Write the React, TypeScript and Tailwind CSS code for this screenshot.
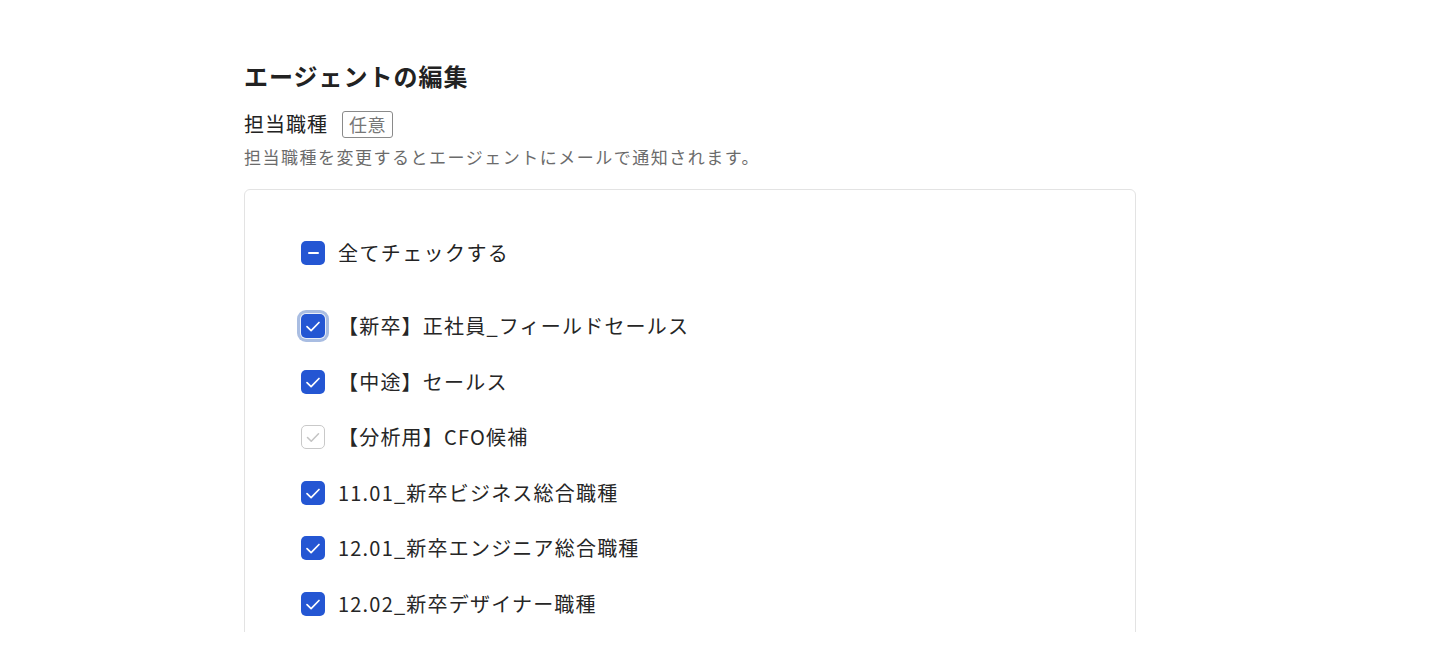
import React from 'react';

type Item = { label: string; state: 'checked' | 'disabled'; focused?: boolean };

const items: Item[] = [
  { label: '【新卒】正社員_フィールドセールス', state: 'checked', focused: true },
  { label: '【中途】セールス', state: 'checked' },
  { label: '【分析用】CFO候補', state: 'disabled' },
  { label: '11.01_新卒ビジネス総合職種', state: 'checked' },
  { label: '12.01_新卒エンジニア総合職種', state: 'checked' },
  { label: '12.02_新卒デザイナー職種', state: 'checked' },
];

const CheckMark = ({ color }: { color: string }) => (
  <svg width="24" height="24" viewBox="0 0 24 24" fill="none">
    <path d="M6 12.6l4.1 4 7.9-8.1" stroke={color} strokeWidth="1.7" strokeLinecap="round" strokeLinejoin="round" />
  </svg>
);

const Box = ({ state, focused }: { state: Item['state'] | 'mixed'; focused?: boolean }) => {
  if (state === 'disabled') {
    return (
      <span className="flex h-6 w-6 shrink-0 items-center justify-center rounded-[5px] border border-[#c9c9c9] bg-white">
        <CheckMark color="#c4c4c4" />
      </span>
    );
  }
  return (
    <span
      className={
        focused
          ? 'flex h-6 w-6 shrink-0 items-center justify-center rounded-[5px] bg-[#2456d3] shadow-[0_0_0_1px_#e9eef8,0_0_0_4px_#a9bde2]'
          : 'flex h-6 w-6 shrink-0 items-center justify-center rounded-[5px] bg-[#2456d3]'
      }
    >
      {state === 'mixed' ? <span className="h-[2px] w-[11px] rounded-full bg-white" /> : <CheckMark color="#ffffff" />}
    </span>
  );
};

const App = () => {
  return (
    <div className="h-[648px] w-[1448px] overflow-hidden bg-white font-['Noto_Sans_CJK_JP','Noto_Sans',sans-serif] text-[#222]">
      <div className="h-[632px] overflow-hidden pl-[244px] pt-[58px]">
        <div className="w-[892px]">
          <h1 className="text-[24px] font-bold leading-[36px] tracking-[1px]">エージェントの編集</h1>
          <div className="mt-[16px] flex items-center gap-[14px]">
            <span className="text-[20px] leading-[28px] tracking-[1px]">担当職種</span>
            <span className="flex h-[27px] items-center rounded-[3px] border border-[#8a8a8a] px-[6px] text-[18px] tracking-[0.5px] text-[#777]">
              任意
            </span>
          </div>
          <p className="mt-[7px] text-[17px] leading-[24px] tracking-[1.5px] text-[#6b6b6b]">
            担当職種を変更するとエージェントにメールで通知されます。
          </p>
          <div className="mt-[20px] h-[600px] rounded-[6px] border border-[#e3e3e3] pl-[56px] pt-[51px]">
            <label className="flex h-6 items-center gap-[13px]">
              <Box state="mixed" />
              <span className="text-[20px] leading-[28px] tracking-[1.4px]">全てチェックする</span>
            </label>
            <div className="mt-[49px] flex flex-col gap-[31.5px]">
              {items.map((item) => (
                <label key={item.label} className="flex h-6 items-center gap-[13px]">
                  <Box state={item.state} focused={item.focused} />
                  <span className="text-[20px] leading-[28px] tracking-[1.2px] text-[#262626]">{item.label}</span>
                </label>
              ))}
            </div>
          </div>
        </div>
      </div>
    </div>
  );
};

export default App;
